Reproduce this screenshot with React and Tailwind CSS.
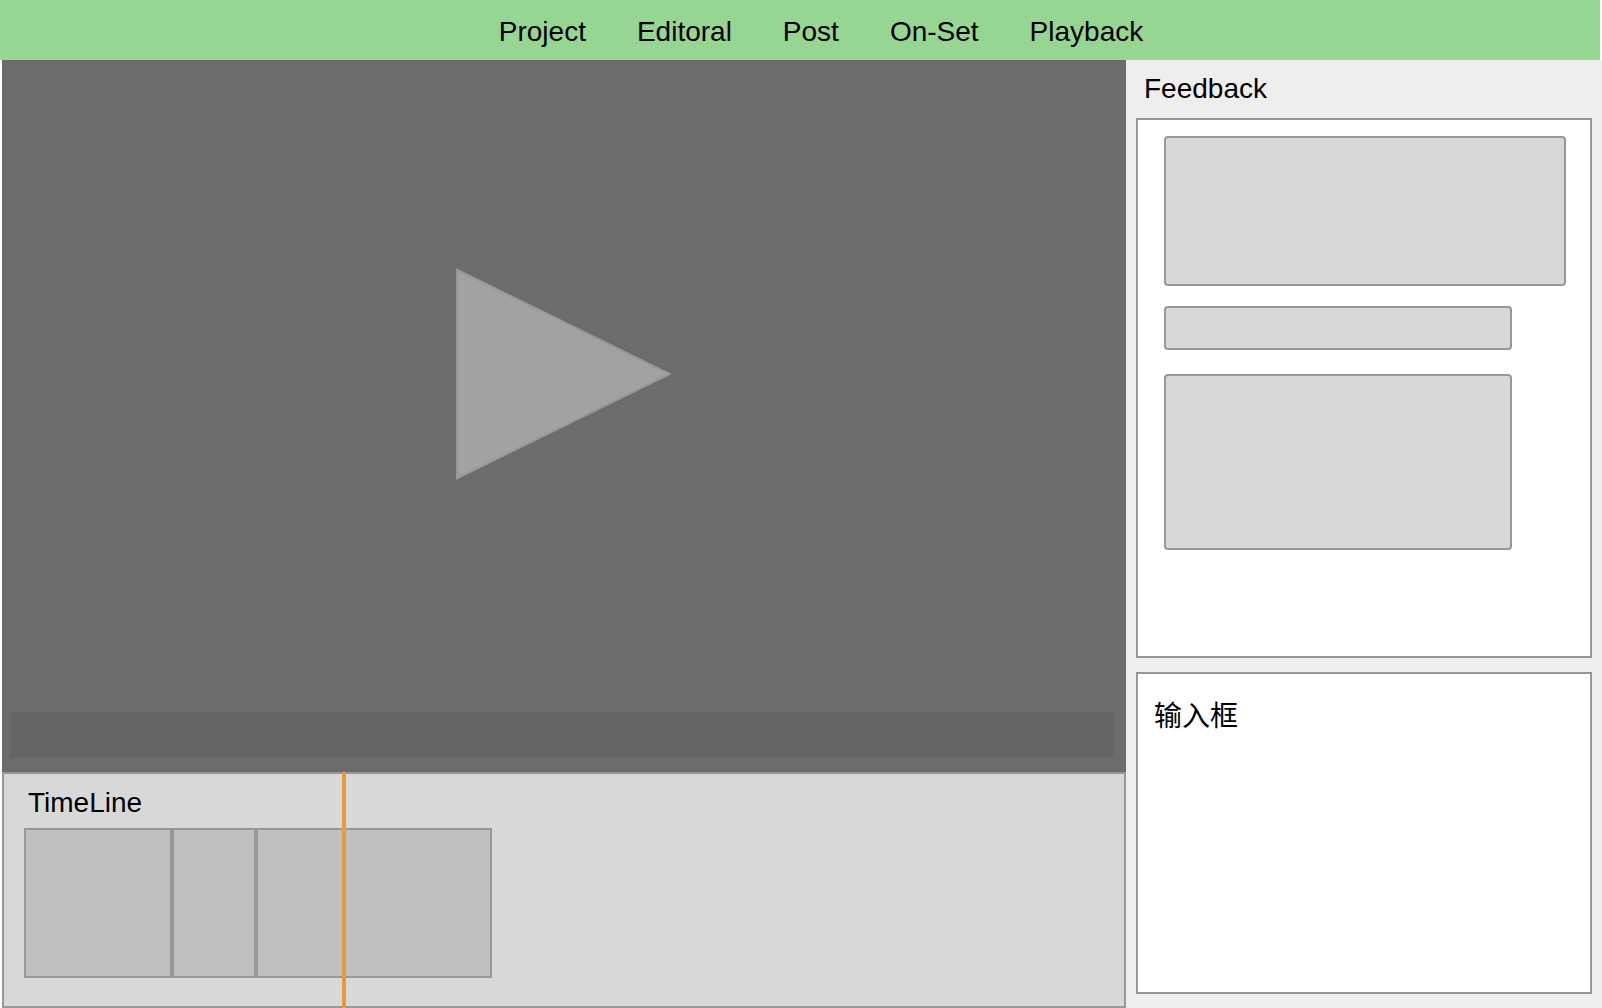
const navItems = ["Project", "Editoral", "Post", "On-Set", "Playback"];

function Header() {
  return (
    <header className="mr-0.5 flex h-[60px] items-center justify-center bg-[#97d593] pt-1 pl-[42px]">
      <nav className="flex gap-[51px]">
        {navItems.map((item) => (
          <a key={item} href="#" className="whitespace-nowrap">
            {item}
          </a>
        ))}
      </nav>
    </header>
  );
}

function Player() {
  return (
    <section aria-label="Player" className="flex flex-1 flex-col bg-[#6c6c6c] pr-3 pb-3.5 pl-2">
      <div className="flex flex-1 items-center justify-center pb-6 pl-1">
        <button type="button" aria-label="Play" className="block">
          <svg width="216" height="212" viewBox="0 0 216 212" className="block">
            <path d="M0 0 L216 106 L0 212 Z" fill="#979797" />
            <path d="M2 3.2 L211.5 106 L2 208.8 Z" fill="#a2a2a2" />
          </svg>
        </button>
      </div>
      <div className="h-[46px] bg-[#656462]" />
    </section>
  );
}

function Timeline() {
  return (
    <section className="relative border-2 border-[#979797] bg-[#d8d8d8] px-5 pt-[13px] pb-7">
      <h2 className="pl-1">TimeLine</h2>
      <div className="mt-[9px] flex h-[150px]">
        <div className="w-[148px] border-2 border-[#979797] bg-[#c0bebf]" />
        <div className="w-[84px] border-2 border-[#979797] bg-[#c0bebf]" />
        <div className="w-[236px] border-2 border-[#979797] bg-[#c0bebf]" />
      </div>
      <div className="absolute -top-0.5 -bottom-0.5 left-[338px] w-1 bg-[#e49a41]" />
    </section>
  );
}

function Feedback() {
  return (
    <aside className="flex w-[476px] shrink-0 flex-col bg-[#eeeeee] px-2.5 pt-[13px] pb-3.5">
      <h2 className="pl-2">Feedback</h2>
      <div className="mt-[13px] flex-1 border-2 border-[#979797] bg-white pt-4 pr-6 pl-[26px]">
        <div className="h-[150px] rounded border-2 border-[#979797] bg-[#d8d8d8]" />
        <div className="mt-5 mr-[54px] h-11 rounded border-2 border-[#979797] bg-[#d8d8d8]" />
        <div className="mt-6 mr-[54px] h-44 rounded border-2 border-[#979797] bg-[#d8d8d8]" />
      </div>
      <textarea
        aria-label="输入框"
        defaultValue="输入框"
        className="mt-3.5 block h-[322px] w-full resize-none rounded-none border-2 border-[#979797] bg-white px-4 py-[27px] outline-none"
      />
    </aside>
  );
}

export default function App() {
  return (
    <div className="flex min-h-screen flex-col bg-white font-['Liberation_Sans','Noto_Sans_CJK_SC',sans-serif] text-[28px] leading-8 text-black">
      <Header />
      <div className="flex flex-1 pl-0.5">
        <main className="flex min-w-0 flex-1 flex-col">
          <Player />
          <Timeline />
        </main>
        <Feedback />
      </div>
    </div>
  );
}
